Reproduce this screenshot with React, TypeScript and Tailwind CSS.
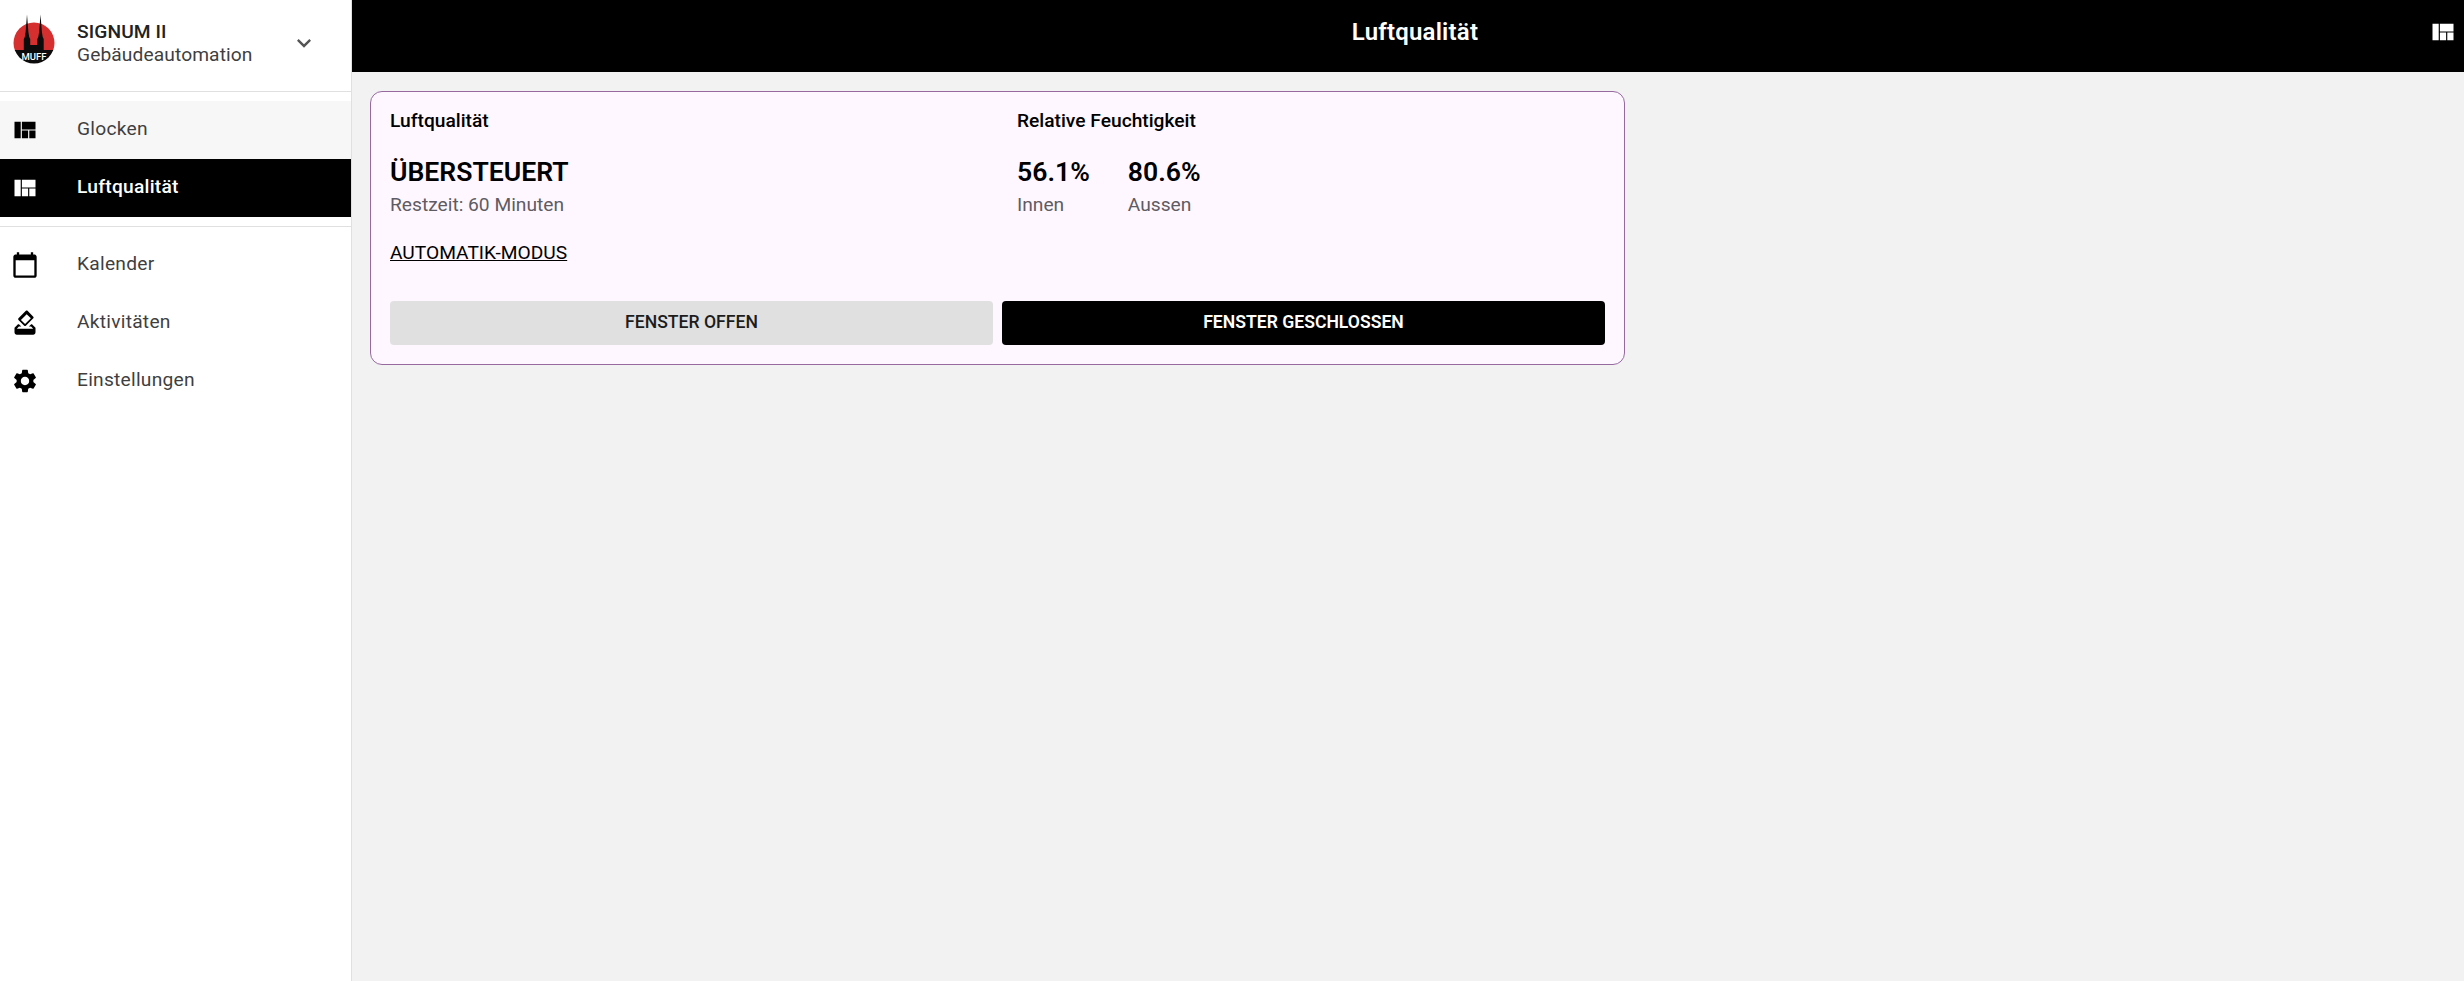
const paths = {
  quilt: 'M21 5v6.5H9.33V5H21zM14.67 19v-6.5H9.33V19h5.34zM15.67 12.5V19H21v-6.5h-5.33zM8.33 19V5H3v14h5.33z',
  calendar: 'M20 3h-1V1h-2v2H7V1H5v2H4c-1.1 0-2 .9-2 2v16c0 1.1.9 2 2 2h16c1.1 0 2-.9 2-2V5c0-1.1-.9-2-2-2zm0 18H4V8h16v13z',
  vote: 'M18 13h-.68l-2 2h1.91L19 17H5l1.78-2h2.05l-2-2H6l-3 3v4c0 1.1.89 2 1.99 2H19c1.1 0 2-.89 2-2v-4l-3-3zm-1-5.05l-4.95 4.95-3.54-3.54 4.95-4.95L17 7.95zm-4.24-6.36L6.39 7.95c-.39.39-.39 1.02 0 1.41l4.95 4.95c.39.39 1.02.39 1.41 0l6.36-6.36c.39-.39.39-1.02 0-1.41L14.16 1.6c-.38-.39-1.01-.39-1.4-.01z',
  gear: 'M19.14 12.94c.04-.3.06-.61.06-.94 0-.32-.02-.64-.07-.94l2.03-1.58c.18-.14.23-.41.12-.61l-1.92-3.32c-.12-.22-.37-.29-.59-.22l-2.39.96c-.5-.38-1.03-.7-1.62-.94l-.36-2.54c-.04-.24-.24-.41-.48-.41h-3.84c-.24 0-.43.17-.47.41l-.36 2.54c-.59.24-1.13.57-1.62.94l-2.39-.96c-.22-.08-.47 0-.59.22L2.74 8.87c-.12.21-.08.47.12.61l2.03 1.58c-.05.3-.09.63-.09.94s.02.64.07.94l-2.03 1.58c-.18.14-.23.41-.12.61l1.92 3.32c.12.22.37.29.59.22l2.39-.96c.5.38 1.03.7 1.62.94l.36 2.54c.05.24.24.41.48.41h3.84c.24 0 .44-.17.47-.41l.36-2.54c.59-.24 1.13-.56 1.62-.94l2.39.96c.22.08.47 0 .59-.22l1.92-3.32c.12-.22.07-.47-.12-.61l-2.01-1.58zM12 15.6c-1.98 0-3.6-1.62-3.6-3.6s1.62-3.6 3.6-3.6 3.6 1.62 3.6 3.6-1.62 3.6-3.6 3.6z',
}

const Icon = ({ d, className }: { d: string; className: string }) => (
  <svg viewBox="0 0 24 24" fill="currentColor" className={className}>
    <path d={d} />
  </svg>
)

const Logo = () => (
  <svg viewBox="0 0 44 52" className="h-[52px] w-[44px] shrink-0">
    <defs>
      <clipPath id="disc">
        <circle cx="22" cy="30" r="20.5" />
      </clipPath>
    </defs>
    <g clipPath="url(#disc)">
      <rect x="0" y="0" width="44" height="38" fill="#d5302f" />
      <rect x="0" y="37" width="44" height="16" fill="#0c0c0c" />
    </g>
    <path d="M15 1.5 L16.4 19 L17.2 24 L18.2 26 L18.2 38 L11.8 38 L11.8 26 L12.8 24 L13.6 19 Z" fill="#0c0c0c" />
    <path d="M28.5 1.5 L29.9 19 L30.7 24 L31.7 26 L31.7 38 L25.3 38 L25.3 26 L26.3 24 L27.1 19 Z" fill="#0c0c0c" />
    <rect x="18" y="32" width="8" height="6" fill="#0c0c0c" />
    <text x="22" y="46.5" textAnchor="middle" fontSize="9.5" fontWeight="500" fill="#fff" fontFamily="Roboto, sans-serif">
      MUFF
    </text>
  </svg>
)

const NavItem = ({ icon, label, active, hover }: { icon: string; label: string; active?: boolean; hover?: boolean }) => (
  <div
    className={`flex h-[58px] items-center ${active ? 'bg-black font-medium text-white' : hover ? 'bg-[#f7f7f7] text-[#3f3f3f]' : 'text-[#3f3f3f]'}`}
  >
    <Icon d={icon} className={`ml-[11px] h-7 w-7 ${active ? 'text-white' : 'text-black'}`} />
    <span className="ml-[38px] pb-[1px] text-[19.2px] tracking-[0.25px]">{label}</span>
  </div>
)

const Divider = () => <div className="h-px bg-[#e0e0e0]" />

const Stat = ({ value, label }: { value: string; label: string }) => (
  <div>
    <div className="text-[26.6px] font-semibold leading-[34px] text-black">{value}</div>
    <div className="mt-[4px] text-[19.2px] leading-[24px] text-[#5f5b63]">{label}</div>
  </div>
)

export default function App() {
  return (
    <div className="flex h-[981px] w-[2464px] overflow-hidden bg-[#f2f2f2] font-['Roboto',sans-serif]">
      <aside className="flex w-[352px] shrink-0 flex-col border-r border-[#e0e0e0] bg-white">
        <div className="flex h-[91px] items-center pb-[6px]">
          <div className="ml-3 mb-[8px]">
            <Logo />
          </div>
          <div className="ml-[21px] flex-1 text-[19.2px] leading-[23px] tracking-[0.1px] text-[#3f3f3f]">
            <div className="font-medium text-[#222]">SIGNUM II</div>
            <div>Gebäudeautomation</div>
          </div>
          <svg viewBox="0 0 24 24" fill="#555" className="mr-[33px] h-7 w-7">
            <path d="M7.41 8.59 12 13.17l4.59-4.58L18 10l-6 6-6-6z" />
          </svg>
        </div>
        <Divider />
        <div className="pt-[9px]">
          <NavItem icon={paths.quilt} label="Glocken" hover />
          <NavItem icon={paths.quilt} label="Luftqualität" active />
        </div>
        <div className="py-[9px]">
          <Divider />
        </div>
        <div>
          <NavItem icon={paths.calendar} label="Kalender" />
          <NavItem icon={paths.vote} label="Aktivitäten" />
          <NavItem icon={paths.gear} label="Einstellungen" />
        </div>
      </aside>
      <main className="flex min-w-0 flex-1 flex-col">
        <header className="flex h-[72px] items-center bg-black pb-[8px] pl-[49px] text-white">
          <h1 className="flex-1 text-center text-[24px] font-semibold tracking-[0.2px]">Luftqualität</h1>
          <Icon d={paths.quilt} className="mr-[7px] h-7 w-7" />
        </header>
        <div className="px-[18px] pt-[19px]">
          <section className="w-[1255px] rounded-xl border border-[#96699f] bg-[#fef7ff] px-[19px] pb-[19px] pt-[18px]">
            <div className="flex h-[191px]">
              <div className="w-[627px]">
                <div className="text-[19.2px] font-medium leading-[22px] text-black">Luftqualität</div>
                <div className="mt-[23px] text-[26.6px] font-semibold leading-[34px] text-black">ÜBERSTEUERT</div>
                <div className="mt-[4px] text-[19.2px] leading-[24px] text-[#5f5b63]">Restzeit: 60 Minuten</div>
                <a className="mt-[24px] inline-block text-[19.2px] leading-[24px] text-black underline">AUTOMATIK-MODUS</a>
              </div>
              <div>
                <div className="text-[19.2px] font-medium leading-[22px] text-black">Relative Feuchtigkeit</div>
                <div className="mt-[23px] flex gap-[38px]">
                  <Stat value="56.1%" label="Innen" />
                  <Stat value="80.6%" label="Aussen" />
                </div>
              </div>
            </div>
            <div className="flex gap-[9px]">
              <button className="h-[44px] flex-1 rounded bg-[#e0e0e0] pb-[1px] text-[17.6px] font-medium text-[#1c1c1c]">FENSTER OFFEN</button>
              <button className="h-[44px] flex-1 rounded bg-black pb-[1px] text-[17.6px] font-semibold text-white">FENSTER GESCHLOSSEN</button>
            </div>
          </section>
        </div>
      </main>
    </div>
  )
}
